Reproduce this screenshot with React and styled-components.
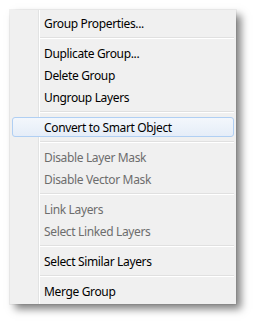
import React from "react";
import styled, { createGlobalStyle } from "styled-components";

const Global = createGlobalStyle`
  html, body { margin: 0; padding: 0; background: #ffffff; }
  body { width: 254px; height: 322px; overflow: hidden; }
`;

const Page = styled.div`
  padding: 10px 0 0 10px;
`;

const Menu = styled.div`
  width: 226px;
  box-sizing: border-box;
  padding: 2px;
  display: flex;
  flex-direction: column;
  background:
    linear-gradient(
      to right,
      transparent 28px,
      #e2e3e3 28px,
      #e2e3e3 29px,
      #ffffff 29px,
      #ffffff 30px,
      transparent 30px
    ),
    #f0f0f0;
  box-shadow:
    0 0 0 1px rgba(0, 0, 0, 0.05),
    5px 5px 8px rgba(0, 0, 0, 0.5);
  font-family: "Noto Sans", "Open Sans", sans-serif;
  font-size: 12px;
  letter-spacing: -0.35px;
`;

const Item = styled.div`
  height: 22px;
  box-sizing: border-box;
  display: flex;
  align-items: center;
  padding-left: 32px;
  color: ${(p) => (p.$disabled ? "#6d6d6d" : "#000000")};
  white-space: nowrap;
  ${(p) =>
    p.$hover &&
    `
    height: 20px;
    margin: 1px 0;
    padding-left: 31px;
    border: 1px solid #b0cff3;
    border-radius: 3px;
    background: linear-gradient(to bottom, #f3f7fc, #e5edf8);
  `}
`;

const Separator = styled.div`
  height: 8px;
  display: flex;
  flex-direction: column;
  justify-content: center;
  padding-left: 28px;
  &::before {
    content: "";
    display: block;
    height: 1px;
    background: #e0e0e0;
  }
  &::after {
    content: "";
    display: block;
    height: 1px;
    background: #ffffff;
  }
`;

const entries = [
  { label: "Group Properties..." },
  "sep",
  { label: "Duplicate Group..." },
  { label: "Delete Group" },
  { label: "Ungroup Layers" },
  "sep",
  { label: "Convert to Smart Object", hover: true },
  "sep",
  { label: "Disable Layer Mask", disabled: true },
  { label: "Disable Vector Mask", disabled: true },
  "sep",
  { label: "Link Layers", disabled: true },
  { label: "Select Linked Layers", disabled: true },
  "sep",
  { label: "Select Similar Layers" },
  "sep",
  { label: "Merge Group" },
];

export default function App() {
  return (
    <>
      <Global />
      <Page>
        <Menu>
          {entries.map((e, i) =>
            e === "sep" ? (
              <Separator key={i} />
            ) : (
              <Item key={i} $disabled={e.disabled} $hover={e.hover}>
                {e.label}
              </Item>
            )
          )}
        </Menu>
      </Page>
    </>
  );
}
